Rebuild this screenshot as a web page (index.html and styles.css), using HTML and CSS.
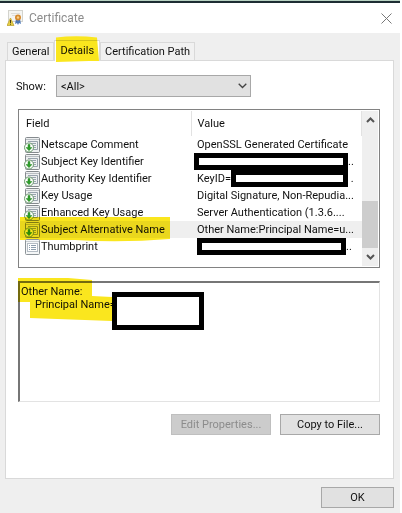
FILE: index.html
```
<!DOCTYPE html>
<html lang="en">
<head>
    <meta charset="UTF-8">
    <meta name="viewport" content="width=device-width, initial-scale=1.0">
    <title>Certificate</title>
    <link rel="stylesheet" href="styles.css">
</head>
<body>

<!-- Shared row icons -->
<svg class="defs" aria-hidden="true">
    <symbol id="icon-doc" viewBox="0 0 16 16">
        <rect x="1.5" y="0.5" width="14" height="15" rx="1" fill="#f4f6f7" stroke="#8d9499"/>
        <path d="M2 2.5h13" stroke="#c9ced2"/>
        <rect x="3.5" y="4.5" width="10" height="8" fill="#fff" stroke="#b4bcc4"/>
        <path d="M5 6.5h1M5 8.5h1M5 10.5h1M7 6.5h5M7 8.5h5M7 10.5h5" stroke="#8c9dad"/>
    </symbol>
    <symbol id="icon-ext" viewBox="0 0 16 16">
        <rect x="1.5" y="0.5" width="14" height="15" rx="1" fill="#eef0f1" stroke="#858a8e"/>
        <path d="M2 2.5h13" stroke="#b9bec2"/>
        <path d="M4 4.5h9.500v8H9M6 6.500h6M8 8.500h4M9 10.500h3" fill="none" stroke="#98a3ad"/>
        <circle cx="5" cy="10.500" r="4.500" fill="#fff" stroke="#6a9a6c"/>
        <path d="M4 7.500h2v3h2L5 13.700 2 10.500h2z" fill="#2f9e2b" stroke="#2a8a28" stroke-width=".5"/>
    </symbol>
</svg>

<div class="window">
    <div class="backdrop"></div>
    <header class="title-bar">
        <svg class="cert-icon" viewBox="0 0 16 16" aria-hidden="true">
            <rect x="1.500" y="0.500" width="14" height="11" fill="#f5f5f2" stroke="#d3d3cd"/>
            <path d="M4 3.500h9M5 5.500h4" stroke="#deded8"/>
            <path d="M9 9l-1 5 2-1 1 2 1-2 2 1-1-5z" fill="#4d78b8"/>
            <circle cx="11" cy="7.500" r="3" fill="#d78a2c"/>
            <circle cx="11" cy="7.500" r="1.200" fill="#f6cf8a"/>
            <path d="M3.500 8L7 15.500H0z" fill="#e6ce45" stroke="#b99d26" stroke-width=".7"/>
            <path d="M3.500 10v3M3.500 13.700v1" stroke="#4b4014"/>
        </svg>
        <span class="title">Certificate</span>
        <button class="close" type="button" aria-label="Close">
            <svg viewBox="0 0 11 11"><path d="M.5.5l10 10M10.500.5l-10 10" stroke="#777" fill="none"/></svg>
        </button>
    </header>

    <main class="content">
        <div class="tabs" role="tablist">
            <button class="tab" type="button" role="tab">General</button>
            <button class="tab active" type="button" role="tab" aria-selected="true">Details
                <svg class="marker marker-tab" viewBox="0 0 43 26" preserveAspectRatio="none"><path d="M0 1.500Q20-1 41 1.500L43 25 33 25 0 26z"/></svg>
            </button>
            <button class="tab" type="button" role="tab">Certification Path</button>
        </div>

        <section class="panel">
            <div class="filter">
                <label for="show">Show:</label>
                <div class="select-wrap">
                    <select id="show">
                        <option>&lt;All&gt;</option>
                    </select>
                    <svg class="arrow" viewBox="0 0 9 6"><path d="M.7.7l3.800 3.800L8.300.7" fill="none" stroke="#444" stroke-width="1.300"/></svg>
                </div>
            </div>

            <div class="list">
                <table class="fields">
                    <thead>
                        <tr><th class="col-field">Field</th><th>Value</th></tr>
                    </thead>
                    <tbody>
                        <tr>
                            <td><div class="cell"><svg class="icon"><use href="#icon-ext"/></svg>Netscape Comment</div></td>
                            <td><div class="cell">OpenSSL Generated Certificate</div></td>
                        </tr>
                        <tr>
                            <td><div class="cell"><svg class="icon"><use href="#icon-ext"/></svg>Subject Key Identifier</div></td>
                            <td><div class="cell"><span class="redacted wide"></span>..</div></td>
                        </tr>
                        <tr>
                            <td><div class="cell"><svg class="icon"><use href="#icon-ext"/></svg>Authority Key Identifier</div></td>
                            <td><div class="cell">KeyID=<span class="redacted short"></span>&nbsp;.</div></td>
                        </tr>
                        <tr>
                            <td><div class="cell"><svg class="icon"><use href="#icon-ext"/></svg>Key Usage</div></td>
                            <td><div class="cell">Digital Signature, Non-Repudia...</div></td>
                        </tr>
                        <tr>
                            <td><div class="cell"><svg class="icon"><use href="#icon-ext"/></svg>Enhanced Key Usage</div></td>
                            <td><div class="cell">Server Authentication (1.3.6....</div></td>
                        </tr>
                        <tr class="selected">
                            <td><div class="cell"><svg class="icon"><use href="#icon-ext"/></svg>Subject Alternative Name
                                <svg class="marker marker-row" viewBox="0 0 150 25" preserveAspectRatio="none"><path d="M0 0L150 0 150 22Q100 26 55 23L0 23z"/></svg></div></td>
                            <td><div class="cell">Other Name:Principal Name=u...</div></td>
                        </tr>
                        <tr>
                            <td><div class="cell"><svg class="icon"><use href="#icon-doc"/></svg>Thumbprint</div></td>
                            <td><div class="cell"><span class="redacted"></span>..</div></td>
                        </tr>
                    </tbody>
                </table>
                <div class="scrollbar">
                    <svg class="scroll-arrow" viewBox="0 0 9 6"><path d="M1 5l3.500-3.500L8 5" fill="none" stroke="#555" stroke-width="2"/></svg>
                    <div class="thumb"></div>
                    <svg class="scroll-arrow" viewBox="0 0 9 6"><path d="M1 1l3.500 3.500L8 1" fill="none" stroke="#555" stroke-width="2"/></svg>
                </div>
            </div>

            <div class="detail">
                <svg class="marker marker-detail" viewBox="0 0 94 44"><path d="M0 0L50 0 74 2 74 18 94 19 94 43 12 40 12 24 0 24z"/></svg>
                <p>Other Name:</p>
                <p class="indent">Principal Name=<span class="redacted block"></span></p>
            </div>

            <div class="actions">
                <button class="btn" type="button" disabled>Edit Properties...</button>
                <button class="btn" type="button">Copy to File...</button>
            </div>
        </section>

        <footer class="footer">
            <button class="btn ok" type="button">OK</button>
        </footer>
    </main>
</div>

</body>
</html>
```
FILE: styles.css
```
* {
    box-sizing: border-box;
}
body {
    margin: 0;
    background: #fff;
    color: #111;
    font-family: Roboto, "Open Sans", sans-serif;
    font-size: 11px;
    line-height: 17px;
}
button, select {
    font: inherit;
    color: inherit;
    margin: 0;
    padding: 0;
}
p {
    margin: 0;
}
.defs {
    display: none;
}
.window {
    display: flex;
    flex-direction: column;
    min-height: 100vh;
    margin-right: 2px;
}
.backdrop {
    height: 3px;
    background: linear-gradient(#b9d3c3 1px, #1d2d33 1px);
}

/* Title bar */
.title-bar {
    display: flex;
    align-items: center;
    height: 30px;
    padding: 0 8px 0 7px;
    background: #fff;
    color: #8c8c8c;
}
.cert-icon {
    width: 16px;
    height: 16px;
    margin-right: 6px;
}
.title {
    flex: 1;
    font-size: 12px;
}
.close {
    display: flex;
    border: 0;
    background: none;
}
.close svg {
    width: 11px;
    height: 11px;
}

.content {
    flex: 1;
    padding: 7px 6px 4px 5px;
    background: #efefef;
}

/* Tabs */
.tabs {
    display: flex;
    align-items: flex-end;
    height: 20px;
    padding-left: 2px;
}
.tab {
    height: 18px;
    border: 1px solid #d9d9d9;
    border-bottom: 0;
    background: #f1f1f1;
    padding: 0 4px;
    white-space: nowrap;
}
.tab.active {
    position: relative;
    z-index: 1;
    height: 21px;
    margin-bottom: -1px;
    padding: 0 5px 2px;
    background: #fff;
}

/* Highlighter strokes over the text */
.marker {
    position: absolute;
    fill: #fae61e;
    mix-blend-mode: multiply;
    pointer-events: none;
}
.marker-tab {
    left: 1px;
    top: -5px;
    width: 43px;
    height: 26px;
}
.marker-row {
    left: -4px;
    top: -4px;
    width: 150px;
    height: 25px;
}
.marker-detail {
    left: -2px;
    top: -5px;
    width: 94px;
    height: 44px;
}

.panel {
    border: 1px solid #d9d9d9;
    background: #fff;
    padding: 14px 13px 43px 12px;
}
.filter {
    display: flex;
    align-items: center;
    margin-bottom: 12px;
    margin-left: -2px;
}
.filter label {
    width: 40px;
}
.select-wrap {
    position: relative;
    flex: 0 1 195px;
}
select {
    display: block;
    width: 100%;
    height: 22px;
    padding-left: 4px;
    border: 1px solid #a8a8a8;
    border-radius: 0;
    background: #e1e1e1;
    appearance: none;
}
.arrow {
    position: absolute;
    right: 4px;
    top: 8px;
    width: 9px;
    height: 6px;
}

/* Field list */
.list {
    display: flex;
    border: 1px solid #828282;
    padding: 1px;
    height: 159px;
}
.fields {
    flex: 1;
    width: 100%;
    align-self: flex-start;
    border-collapse: collapse;
    table-layout: fixed;
}
th {
    height: 25px;
    padding: 0 0 0 6px;
    border-right: 1px solid #e2e2e2;
    font-weight: normal;
    text-align: left;
}
.col-field {
    width: 171px;
}
td {
    height: 17px;
    padding: 0 0 0 6px;
}
td:first-child {
    padding-left: 4px;
}
.cell {
    position: relative;
    display: flex;
    align-items: center;
    height: 17px;
    white-space: nowrap;
}
.icon {
    width: 16px;
    height: 16px;
    margin-right: 1px;
}
.selected {
    background: #efefef;
}
.scrollbar {
    display: flex;
    flex: none;
    flex-direction: column;
    align-items: center;
    width: 16px;
    padding: 6px 0;
    background: #efefef;
}
.scroll-arrow {
    width: 9px;
    height: 6px;
}
.thumb {
    width: 100%;
    height: 47px;
    margin: auto 0 6px;
    background: #cdcdcd;
}

.redacted {
    width: 149px;
    height: 17px;
    border: 5px solid #000;
    background: #fff;
}
.redacted.wide {
    width: 154px;
    margin-left: -3px;
}
.redacted.short {
    width: 117px;
}

/* Value of the selected field */
.detail {
    position: relative;
    height: 121px;
    margin-top: 13px;
    padding: 2px 0 0 1px;
    border: 2px solid #e3e3e3;
    border-top-color: #767676;
    border-left-color: #767676;
    border-right-width: 1px;
    border-bottom-width: 1px;
    line-height: 13px;
}
.indent {
    display: flex;
    padding-left: 14px;
}
.redacted.block {
    position: relative;
    width: 92px;
    height: 38px;
    margin: -6px 0 0 -4px;
}

/* Buttons */
.actions {
    display: flex;
    justify-content: flex-end;
    gap: 9px;
    margin-top: 12px;
}
.btn {
    width: 100px;
    height: 21px;
    border: 1px solid #a8a8a8;
    background: #e1e1e1;
}
.btn:disabled {
    border-color: #bfbfbf;
    background: #ccc;
    color: #8c8c8c;
}
.footer {
    display: flex;
    justify-content: flex-end;
    padding-top: 8px;
}
.ok {
    width: 73px;
}
```
